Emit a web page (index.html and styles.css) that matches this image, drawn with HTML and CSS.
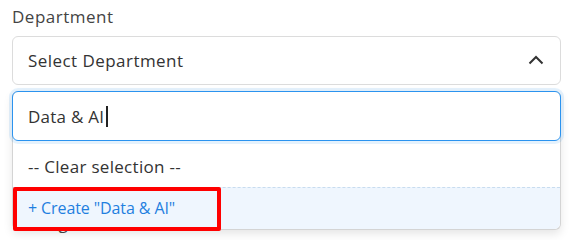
FILE: index.html
```html
<!DOCTYPE html>
<html>
<head>
<meta charset="utf-8">
<link rel="stylesheet" href="styles.css">
</head>
<body>
<div class="form">
  <div class="field">
    <label class="label">Department</label>
    <div class="select">
      <span class="select-text">Select Department</span>
      <svg class="chev" width="16" height="10" viewBox="0 0 16 10"><path d="M1.5 8.5 L8 2 L14.5 8.5" fill="none" stroke="#333" stroke-width="2"/></svg>
    </div>
  </div>
  <div class="field field-next">
    <label class="label">Manager</label>
  </div>

  <div class="dropdown">
    <div class="search"><span class="search-text">Data &amp; AI</span><span class="caret"></span></div>
    <div class="option clear">-- Clear selection --</div>
    <div class="option create">+ Create "Data &amp; AI"</div>
  </div>
  <div class="highlight"></div>
</div>
</body>
</html>
```

FILE: styles.css
```css
html, body {
  margin: 0;
  padding: 0;
  background: #fff;
}
body {
  font-family: "Open Sans", "Liberation Sans", sans-serif;
  font-size: 17px;
  color: #333;
}
.form {
  position: relative;
  padding: 5px 15px 0 12px;
  width: 549px;
}
.field {
  display: flex;
  flex-direction: column;
}
.label {
  font-size: 17px;
  line-height: 24px;
  color: #444;
  letter-spacing: 0.5px;
  margin-bottom: 7px;
}
.select {
  box-sizing: border-box;
  height: 49px;
  border: 1px solid #dcdcdc;
  border-radius: 6px;
  display: flex;
  align-items: center;
  justify-content: space-between;
  padding: 0 16px 0 15px;
}
.select-text {
  letter-spacing: 0.45px;
  color: #333;
}
.chev {
  margin-top: -2px;
}
.field-next {
  margin-top: 126px;
}
.dropdown {
  position: absolute;
  left: 12px;
  top: 91px;
  width: 549px;
  height: 139px;
  box-sizing: border-box;
  border: 1px solid #d4d4d4;
  border-top: none;
  border-radius: 6px;
  background: #fff;
  box-shadow: 0 4px 10px rgba(0,0,0,0.10);
  display: flex;
  flex-direction: column;
}
.search {
  box-sizing: border-box;
  height: 50px;
  margin: 0 -1px;
  border: 1.5px solid #2b93ef;
  border-radius: 6px;
  box-shadow: 0 0 0 3px rgba(43,147,239,0.12);
  display: flex;
  align-items: center;
  padding-left: 15px;
}
.search-text {
  letter-spacing: 0.25px;
  color: #333;
}
.caret {
  display: inline-block;
  width: 2px;
  height: 21px;
  background: #222;
  margin-left: 2px;
}
.option {
  box-sizing: border-box;
  height: 46px;
  display: flex;
  align-items: center;
  padding-left: 15px;
  color: #333;
}
.clear {
  letter-spacing: 0.3px;
  padding-top: 5px;
}
.create {
  flex: 1;
  height: auto;
  font-size: 16px;
  letter-spacing: -0.1px;
  background: #eff6fe;
  border-top: 1px dashed #c8dcef;
  border-radius: 0 0 6px 6px;
  color: #1f7fe0;
  padding-bottom: 2px;
}
.highlight {
  position: absolute;
  left: 13px;
  top: 187px;
  width: 208px;
  height: 44px;
  box-sizing: border-box;
  border: 4px solid #ff0000;
  border-radius: 2px;
}
```
